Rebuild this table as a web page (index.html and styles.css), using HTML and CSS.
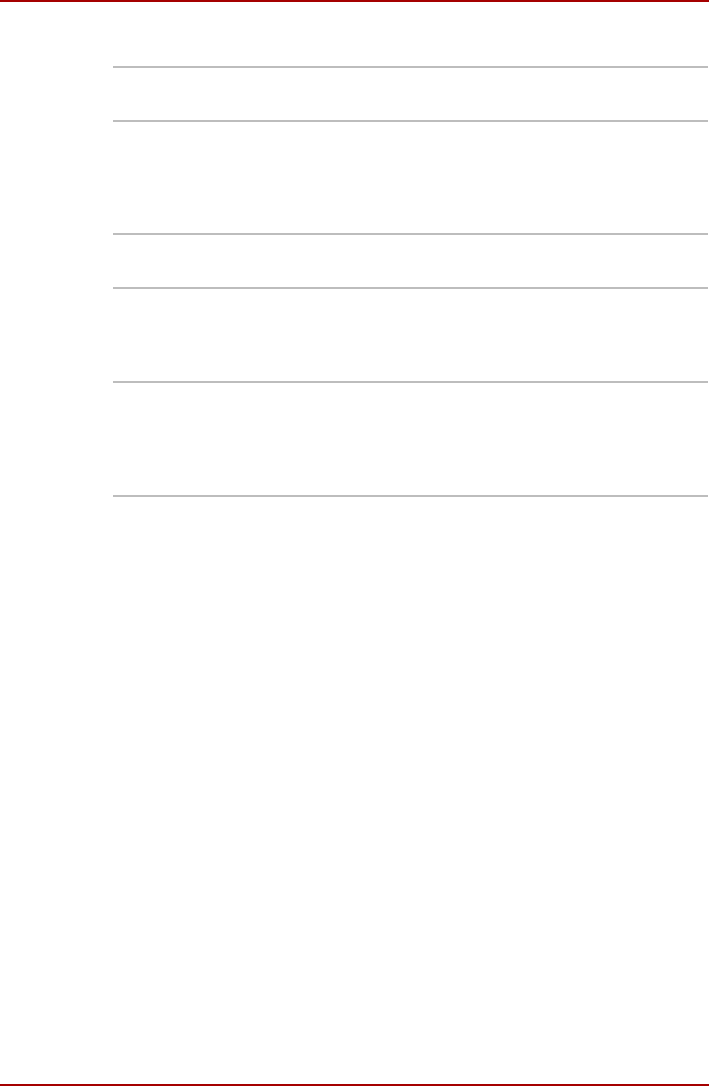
FILE: index.html
```html
<!DOCTYPE html>
<html>
<head>
<meta charset="utf-8">
<link rel="stylesheet" href="styles.css">
</head>
<body>
<div class="page">
  <div class="header-rule"></div>
  <div class="table">
    <div class="row r1"></div>
    <div class="row r2"></div>
    <div class="row r3"></div>
    <div class="row r4"></div>
    <div class="row r5"></div>
  </div>
  <div class="footer-rule"></div>
</div>
</body>
</html>
```
FILE: styles.css
```css
html, body {
  margin: 0;
  padding: 0;
  background: #ffffff;
  font-family: "Liberation Sans", Arial, sans-serif;
}
.page {
  height: 1087px;
  display: flex;
  flex-direction: column;
}
.header-rule {
  height: 2px;
  background: #a50000;
}
.table {
  margin: 64px 1px 0 113px;
  border-bottom: 2px solid #bdbdbd;
}
.row {
  border-top: 2px solid #bdbdbd;
}
.r1 { height: 52px; }
.r2 { height: 111px; }
.r3 { height: 52px; }
.r4 { height: 92px; }
.r5 { height: 112px; }
.footer-rule {
  margin-top: auto;
  margin-bottom: 1px;
  height: 2px;
  background: #a50000;
}
```
